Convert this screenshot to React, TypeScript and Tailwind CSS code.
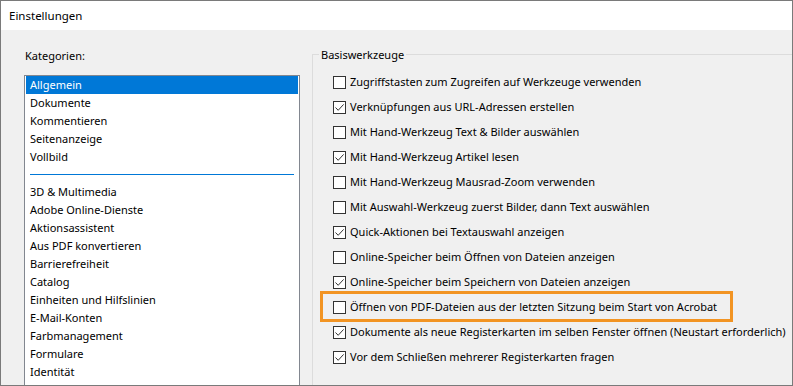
import React from "react";

const groupA = ["Allgemein", "Dokumente", "Kommentieren", "Seitenanzeige", "Vollbild"];
const groupB = [
  "3D & Multimedia",
  "Adobe Online-Dienste",
  "Aktionsassistent",
  "Aus PDF konvertieren",
  "Barrierefreiheit",
  "Catalog",
  "Einheiten und Hilfslinien",
  "E-Mail-Konten",
  "Farbmanagement",
  "Formulare",
  "Identität",
];

const options = [
  { label: "Zugriffstasten zum Zugreifen auf Werkzeuge verwenden", checked: false },
  { label: "Verknüpfungen aus URL-Adressen erstellen", checked: true },
  { label: "Mit Hand-Werkzeug Text & Bilder auswählen", checked: false },
  { label: "Mit Hand-Werkzeug Artikel lesen", checked: true },
  { label: "Mit Hand-Werkzeug Mausrad-Zoom verwenden", checked: false },
  { label: "Mit Auswahl-Werkzeug zuerst Bilder, dann Text auswählen", checked: false },
  { label: "Quick-Aktionen bei Textauswahl anzeigen", checked: true },
  { label: "Online-Speicher beim Öffnen von Dateien anzeigen", checked: false },
  { label: "Online-Speicher beim Speichern von Dateien anzeigen", checked: true },
  { label: "Öffnen von PDF-Dateien aus der letzten Sitzung beim Start von Acrobat", checked: false, highlight: true },
  { label: "Dokumente als neue Registerkarten im selben Fenster öffnen (Neustart erforderlich)", checked: true },
  { label: "Vor dem Schließen mehrerer Registerkarten fragen", checked: true },
];

function Checkbox({ checked }: { checked: boolean }) {
  return (
    <span className="flex h-[13px] w-[13px] shrink-0 items-center justify-center border border-[#333333] bg-white">
      {checked && (
        <svg width="11" height="11" viewBox="0 0 11 11" fill="none">
          <path d="M1.5 5.5 L4.2 8.3 L9.6 2.4" stroke="#333333" strokeWidth="1" />
        </svg>
      )}
    </span>
  );
}

export default function App() {
  return (
    <div
      className="flex h-[386px] w-[793px] flex-col overflow-hidden border border-[#7a7a7a] bg-[#f0f0f0] text-[11px] text-black"
      style={{ fontFamily: '"Noto Sans", "Segoe UI", sans-serif' }}
    >
      <div className="flex h-[29px] shrink-0 items-center bg-white pl-[8px] text-[11.5px]">Einstellungen</div>

      <div className="flex min-h-0 flex-1">
        {/* Kategorien */}
        <div className="w-[299px] shrink-0 pl-[23px] pt-[17px]">
          <div className="pl-[1px] leading-[18px]">Kategorien:</div>
          <div className="mt-[10px] h-[400px] w-[276px] border border-[#828790] bg-white px-[1px]">
            {groupA.map((c, i) => (
              <div
                key={c}
                className={`h-[18px] pl-[4px] leading-[18px] ${i === 0 ? "bg-[#0078d7] text-white" : ""}`}
              >
                {c}
              </div>
            ))}
            <div className="flex h-[17px] items-center px-[4px]">
              <div className="h-px w-full bg-[#0078d7]" />
            </div>
            {groupB.map((c) => (
              <div key={c} className="h-[18px] pl-[4px] leading-[18px]">
                {c}
              </div>
            ))}
          </div>
        </div>

        {/* Basiswerkzeuge */}
        <div className="relative ml-[12px] mt-[24px] flex-1 border-l border-t border-[#dcdcdc] pl-[20px] pt-[15px]">
          <div className="absolute left-[6px] top-[-9px] bg-[#f0f0f0] px-[2px] leading-[18px]">Basiswerkzeuge</div>
          {options.map((o) => (
            <div key={o.label} className="relative flex h-[25px] items-center gap-[4px]">
              {o.highlight && (
                <div className="absolute left-[-13px] top-[-4px] h-[31px] w-[413px] border-[3px] border-[#f29423]" />
              )}
              <Checkbox checked={o.checked} />
              <span className="whitespace-nowrap">{o.label}</span>
            </div>
          ))}
        </div>
      </div>
    </div>
  );
}
